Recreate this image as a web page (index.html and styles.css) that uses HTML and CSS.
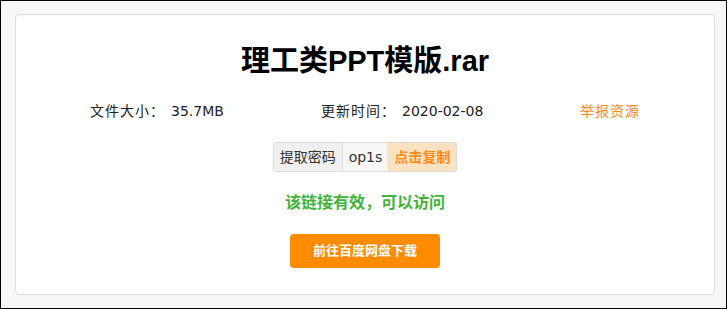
FILE: index.html
```html
<!DOCTYPE html>
<html lang="zh">
<head>
<meta charset="utf-8">
<link rel="stylesheet" href="styles.css">
</head>
<body>
<div class="frame">
  <div class="card">
    <h1 class="title">理工类PPT模版.rar</h1>
    <div class="info">
      <div class="info-item">文件大小：<span class="val">35.7MB</span></div>
      <div class="info-item">更新时间：<span class="val">2020-02-08</span></div>
      <div class="info-item report">举报资源</div>
    </div>
    <div class="code-row">
      <div class="code">
        <span class="code-label">提取密码</span>
        <span class="code-value">op1s</span>
        <span class="code-copy">点击复制</span>
      </div>
    </div>
    <div class="status">该链接有效，可以访问</div>
    <div class="btn-row"><a class="btn">前往百度网盘下载</a></div>
  </div>
</div>
</body>
</html>
```
FILE: styles.css
```css
html, body {
  margin: 0;
  padding: 0;
}
body {
  font-family: "Liberation Sans", "Noto Sans CJK SC", sans-serif;
  color: #222;
}
.frame {
  box-sizing: border-box;
  width: 727px;
  height: 309px;
  border: 1px solid #000;
  background: #f7f7f7;
  padding: 13px 11px 13px 14px;
}
.card {
  box-sizing: border-box;
  width: 700px;
  height: 281px;
  background: #fff;
  border: 1px solid #dddddd;
  border-radius: 4px;
  display: flex;
  flex-direction: column;
  align-items: center;
}
.title {
  margin: 28px 0 0;
  font-size: 29px;
  line-height: 36px;
  font-weight: bold;
  color: #000;
}
.info {
  align-self: stretch;
  display: grid;
  grid-template-columns: 231px 259px auto;
  padding-left: 74px;
  margin-top: 22px;
  font-size: 14px;
  line-height: 20px;
  color: #222;
  letter-spacing: 1px;
}
.val {
  margin-left: 6px;
  font-family: "DejaVu Sans", sans-serif;
  letter-spacing: 0;
}
.report {
  color: #ff8c1a;
}
.code-row {
  margin-top: 21px;
}
.code {
  display: flex;
  border: 1px solid #dddddd;
  border-radius: 2px;
  font-size: 14px;
  line-height: 28px;
}
.code-label {
  background: #f0f0f0;
  padding: 0 6px;
  color: #333;
  border-right: 1px solid #dddddd;
}
.code-value {
  background: #f7f7f7;
  padding: 0 5px 0 6px;
  color: #333;
  font-family: "DejaVu Sans", sans-serif;
}
.code-copy {
  background: #fde2c2;
  color: #ff8c1a;
  font-weight: bold;
  padding: 0 6px 0 6px;
  border-left: 1px solid #e8e8e8;
}
.status {
  margin-top: 20px;
  font-size: 16px;
  line-height: 22px;
  font-weight: bold;
  color: #41b339;
}
.btn-row {
  margin-top: 20px;
}
.btn {
  display: block;
  width: 150px;
  height: 34px;
  line-height: 34px;
  text-align: center;
  background: #ff8c00;
  color: #fff;
  font-size: 13px;
  font-weight: bold;
  border-radius: 4px;
}
```
